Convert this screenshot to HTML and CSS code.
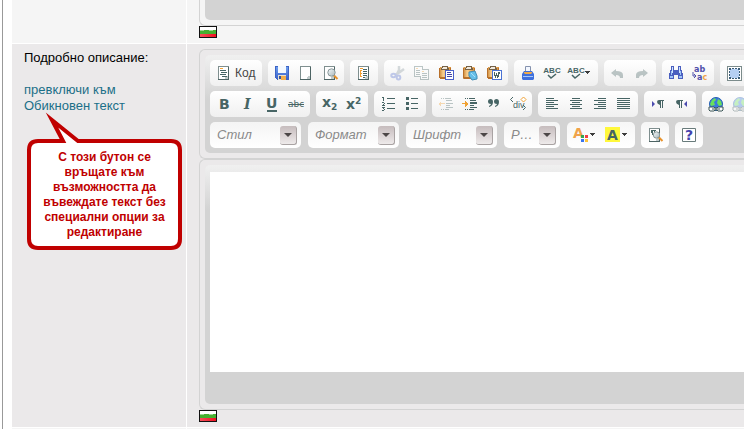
FILE: index.html
```html
<!DOCTYPE html>
<html lang="bg">
<head>
<meta charset="utf-8">
<meta name="viewport" content="width=device-width, initial-scale=1">
<title>Подробно описание</title>
<link rel="stylesheet" href="styles.css">
</head>
<body>
<svg class="defs" aria-hidden="true">
  <defs>
    <linearGradient id="silver" x2="1" y2="1"><stop offset="0" stop-color="#f4fafc"/><stop offset="1" stop-color="#a9b6ba"/></linearGradient>
    <linearGradient id="blue" x2="0" y2="1"><stop offset="0" stop-color="#6b9cec"/><stop offset="1" stop-color="#3a62cc"/></linearGradient>
    <linearGradient id="tan" x2="1" y2="0"><stop offset="0" stop-color="#c9802c"/><stop offset=".35" stop-color="#f7cf90"/><stop offset="1" stop-color="#d98d35"/></linearGradient>
    <linearGradient id="red-band" x2="1" y2="0"><stop offset="0" stop-color="#f6505c"/><stop offset="1" stop-color="#f01020"/></linearGradient>
    <symbol id="page" viewBox="0 0 16 16"><path d="M2 1h11v14H2z" fill="#7f8f8f"/><path d="M12 2h1v13H2v-1h10z" fill="#4d6464"/><path d="M3 2h9v12H3z" fill="#fff"/><path d="M9 14v-2h1v-1h2v3z" fill="#c3cccc"/></symbol>
    <symbol id="clipboard" viewBox="0 0 16 16"><path d="M1 3l1-1h10l1 1v10l-1 1H2l-1-1z" fill="url(#tan)"/><path d="M1 12h12v1l-1 1H2l-1-1zM1 3h1v10H1zm11 0h1v10h-1z" fill="#b8702a"/><path d="M4 1h6v2h1v2H3V3h1z" fill="#756147"/><path d="M5 2h4v2H4V3h1z" fill="#f0e9dd"/></symbol>
    <symbol id="caret" viewBox="0 0 8 16"><path d="M1 6h5v1H5v1H4v1H3V8H2V7H1z" fill="#3c3c3c"/></symbol>
    <symbol id="flag" viewBox="0 0 18 12"><path fill="#111" d="M0 0h18v12H0z"/><path fill="#fff" d="M1 1h16v3H1z"/><path fill="#45b030" d="M1 4h16v4H1z"/><path fill="url(#red-band)" d="M1 8h16v3H1z"/><path fill="#9bd68e" d="M1 4h4v1H1zm9 0h4v1h-4z"/></symbol>
    <symbol id="globe" viewBox="0 0 16 16"><circle cx="8" cy="8" r="6.500" fill="#3b78df" stroke="#245fb1"/><path d="M2 8l2-4 3-2 1 2-2 2 1 3-4 1zM10 3l3 2 1 4-3 1-2-3z" fill="#69e05b"/><path d="M1 11h5l1 1h2l1-1h5v3l-1 1h-4l-1-1H7l-1 1H2l-1-1z" fill="#fff" stroke="#3a5555"/><path d="M4 13h8" stroke="#3a5555"/></symbol>
  </defs>
</svg>

<main class="form">
  <div class="cell light"></div>
  <div class="cell light field first">
    <div class="frame frame-end"><div class="frame-foot"></div></div>
    <svg class="flag crisp" role="img" aria-label="Български"><use href="#flag"/></svg>
  </div>

  <div class="cell side">
    <label for="description">Подробно описание:</label>
    <a href="#plain">превключи към<br>Обикновен текст</a>
    <div class="callout">
      <svg class="bubble" viewBox="0 0 157 140" aria-hidden="true"><path d="M37 29 26 8 52 29H145Q154 29 154 38V127Q154 136 145 136H12Q3 136 3 127V38Q3 29 12 29Z" fill="#fff" stroke="#c00000" stroke-width="4" stroke-miterlimit="12"/></svg>
      <p>С този бутон се връщате към възможността да въвеждате текст без специални опции за редактиране</p>
    </div>
  </div>

  <div class="cell field">
    <div class="frame">
      <div class="toolbar" role="toolbar" aria-label="Форматиране">
        <div class="row">
          <div class="group">
            <button type="button" class="code"><svg viewBox="0 0 16 16" class="crisp"><use href="#page"/><path d="M4 3h3v1H4z" fill="#f3a53a"/><path d="M4 5h6v1H4zm1 2h6v1H5zM4 9h6v1H4zm2 2h5v1H6z" fill="#476565"/></svg><span>Код</span></button>
          </div>
          <div class="group">
            <button type="button" aria-label="Запис"><svg viewBox="0 0 16 16" class="crisp"><path d="M1 1h14v14H3l-2-2z" fill="#3c63c5"/><path d="M2 2h12v12H3l-1-1z" fill="url(#blue)"/><path d="M4 1h8v7H4z" fill="#f4f9ff"/><path d="M4 10h8v5H4z" fill="#e9dfcd"/><path d="M7 11h5v4H7z" fill="#f1ad4c"/><path d="M5 11h2v3H5z" fill="#35559c"/></svg></button>
            <button type="button" aria-label="Нова страница"><svg viewBox="0 0 16 16" class="crisp"><use href="#page"/></svg></button>
            <button type="button" aria-label="Преглед"><svg viewBox="0 0 16 16"><use href="#page"/><path d="M11.500 10l4 4" stroke="#e8922b" stroke-width="2"/><circle cx="9.500" cy="7.500" r="3.700" fill="url(#silver)" stroke="#899799"/></svg></button>
          </div>
          <div class="group">
            <button type="button" aria-label="Шаблони"><svg viewBox="0 0 16 16" class="crisp"><use href="#page"/><path d="M4 3h3v1H4zm0 2h1v7H4zm1 0h1v1H5zm0 3h1v1H5zm0 3h1v1H5z" fill="#ef9e31"/><path d="M7 4h4v1H7zm0 2h4v1H7zm0 2h4v1H7zm0 2h4v1H7zm0 2h2v1H7z" fill="#476565"/></svg></button>
          </div>
          <div class="group">
            <button type="button" disabled aria-label="Отрежи"><svg viewBox="0 0 16 16"><path d="M9 1v4L7 9M14 4l-4 3-5 3" fill="none" stroke="#8c9ba1" stroke-width="2.500"/><ellipse cx="3.500" cy="10.500" rx="2.200" ry="1.800" fill="none" stroke="#5872d0" stroke-width="2"/><ellipse cx="8.500" cy="12.500" rx="1.800" ry="2" fill="none" stroke="#5872d0" stroke-width="2"/></svg></button>
            <button type="button" disabled aria-label="Копирай"><svg viewBox="0 0 16 16" class="crisp"><path d="M0 1h9v11H0zM6 4h9v11H6z" fill="#476565"/><path d="M1 2h7v9H1zM7 5h7v9H7z" fill="#fff"/><path d="M2 3h2v1H2zm6 3h2v1H8z" fill="#ef9e31"/><path d="M2 5h4v1H2zm0 2h4v1H2zm0 2h4v1H2zm6-1h5v1H8zm0 2h5v1H8zm0 2h5v1H8z" fill="#476565"/></svg></button>
            <button type="button" aria-label="Вмъкни"><svg viewBox="0 0 16 16" class="crisp"><use href="#clipboard"/><path d="M7 5h9v10H7z" fill="#4a61ca"/><path d="M8 6h7v8H8z" fill="#fff"/><path d="M9 7h4v1H9zm0 2h5v1H9zm0 2h5v1H9z" fill="#4346a5"/></svg></button>
            <button type="button" aria-label="Вмъкни като текст"><svg viewBox="0 0 16 16"><use href="#clipboard"/><path d="M7 7l6-1 2 5v3l-5 1-3-4z" fill="#65bfe9" stroke="#438cb4"/><path d="M9 8l4 4" stroke="#a9e0fa"/></svg></button>
            <button type="button" aria-label="Вмъкни от Word"><svg viewBox="0 0 16 16" class="crisp"><use href="#clipboard"/><path d="M6 5h10v10H6z" fill="#4a72d4"/><path d="M7 6h8v8H7z" fill="#fff"/><path d="M8 7h1v3h1V8h1v2h1V7h2v2h-1v3h-1v1h-1v-2h-1v2H9v-2H8z" fill="#4a6161"/></svg></button>
          </div>
          <div class="group">
            <button type="button" aria-label="Печат"><svg viewBox="0 0 16 16"><path d="M5.500 1.500h5v5h-5z" fill="#f3f7ff" stroke="#8592ae"/><path d="M4 6h8l2 3v5l-1 1H3l-1-1V9z" fill="#3f70dc"/><path d="M4 7h8v1l-1 1H5L4 8z" fill="#efaa49"/><path d="M3 11h10v1H3z" fill="#a7c7fa"/></svg></button>
            <button type="button" aria-label="Правопис"><svg viewBox="0 0 16 16"><text x="8" y="8" class="glyph tiny">ABC</text><path d="M4 10l3 3 5-4" fill="none" stroke="#476565" stroke-width="1.500"/></svg></button>
            <button type="button" class="menu" aria-label="Проверка при писане"><svg viewBox="0 0 16 16"><text x="8" y="8" class="glyph tiny">ABC</text><path d="M4 10l3 3 5-4" fill="none" stroke="#476565" stroke-width="1.500"/></svg><svg class="caret crisp"><use href="#caret"/></svg></button>
          </div>
          <div class="group">
            <button type="button" disabled aria-label="Отмени"><svg viewBox="0 0 16 16"><path d="M1 8l5-4v2q7 0 7 4v3h-3q0-3-4-3v2z" fill="#476565"/></svg></button>
            <button type="button" disabled aria-label="Повтори"><svg viewBox="0 0 16 16"><path d="M14 8L9 4v2q-7 0-7 4v3h3q0-3 4-3v2z" fill="#476565"/></svg></button>
          </div>
          <div class="group">
            <button type="button" aria-label="Търси"><svg viewBox="0 0 16 16" class="crisp"><path d="M3 1h3v4h4V1h3v4h1v3h1v6h-5v-4H6v4H1V8h1V5h1z" fill="#4a5fc0"/><path d="M4 2h1v6H4zm7 0h1v6h-1z" fill="#cfe6ff"/><path d="M3 6h1v4H3zm9 0h1v4h-1zM2 11h3v2H2zm9 0h3v2h-3z" fill="#9fc5f7"/></svg></button>
            <button type="button" aria-label="Замени"><svg viewBox="0 0 16 16"><text x="2" y="7" class="glyph swap">ab</text><text x="5" y="15" class="glyph swap">a<tspan class="accent">c</tspan></text><path d="M1 7v4h3M2 9l2 2-2 2" fill="none" stroke="#5050ab"/></svg></button>
          </div>
          <div class="group open">
            <button type="button" aria-label="Избери всичко"><svg viewBox="0 0 16 16" class="crisp"><path d="M1 1h15v15H1z" fill="#7b8b8b"/><path d="M2 2h13v13H2z" fill="#fff"/><path d="M4 4h9v9H4z" fill="#b5cff3"/><path d="M3 3h2v2H3zm3 0h2v1H6zm3 0h2v1H9zm3 0h2v2h-2zM3 6h1v2H3zm0 3h1v2H3zm10-3h1v2h-1zm0 3h1v2h-1zM3 12h2v2H3zm3 1h2v1H6zm3 0h2v1H9zm3-1h2v2h-2z" fill="#3b5d78"/></svg></button>
          </div>
        </div>

        <div class="row">
          <div class="group">
            <button type="button" aria-label="Удебелен"><svg viewBox="0 0 16 16"><text x="3" y="13" class="glyph big">B</text></svg></button>
            <button type="button" aria-label="Наклонен"><svg viewBox="0 0 16 16"><text x="4" y="13" class="glyph big italic">I</text></svg></button>
            <button type="button" aria-label="Подчертан"><svg viewBox="0 0 16 16"><text x="2" y="12" class="glyph big">U</text><path d="M3 14h10v2H3z" fill="#476565"/></svg></button>
            <button type="button" aria-label="Зачертан"><svg viewBox="0 0 16 16"><text x="0" y="11" class="glyph strike">abc</text><path d="M0 8h16v1H0z" fill="#476565"/></svg></button>
          </div>
          <div class="group">
            <button type="button" aria-label="Долен индекс"><svg viewBox="0 0 16 16"><text x="0" y="11" class="glyph big">x</text><text x="9" y="14" class="glyph index">2</text></svg></button>
            <button type="button" aria-label="Горен индекс"><svg viewBox="0 0 16 16"><text x="0" y="13" class="glyph big">x</text><text x="9" y="8" class="glyph index">2</text></svg></button>
          </div>
          <div class="group">
            <button type="button" aria-label="Номериран списък"><svg viewBox="0 0 16 16" class="crisp"><path d="M2 1h2v4H3V2H2zM2 6h2v1h1v1H4v1h1v1H2V9h1V8h1V7H2zM2 11h3v1H4v1h1v1H4v1H2v-1h2v-1H3v-1H2zM7 2h8v1H7zm0 5h8v1H7zm0 5h8v1H7z" fill="#476565"/></svg></button>
            <button type="button" aria-label="Списък с точки"><svg viewBox="0 0 16 16" class="crisp"><path d="M2 1h3v3H2zm0 5h3v3H2zm0 5h3v3H2zM7 2h7v1H7zm0 5h7v1H7zm0 5h7v1H7z" fill="#476565"/></svg></button>
          </div>
          <div class="group">
            <button type="button" disabled aria-label="Намали отстъпа"><svg viewBox="0 0 16 16" class="crisp"><path d="M3 2h1v1H3zm2 0h1v1H5zm2 0h6v1H7zm1 2h6v1H8zm0 3h7v1H8zm0 2h4v1H8zm0 2h7v1H8zm-5 2h1v1H3zm2 0h1v1H5zm2 0h4v1H7z" fill="#476565"/><path d="M0 8l3-3v2h4v1H3v3z" fill="#f0a132"/></svg></button>
            <button type="button" aria-label="Увеличи отстъпа"><svg viewBox="0 0 16 16" class="crisp"><path d="M3 2h1v1H3zm2 0h1v1H5zm2 0h6v1H7zm1 2h6v1H8zm0 2h7v2H8zm0 3h4v1H8zm0 2h7v1H8zm-5 2h1v1H3zm2 0h1v1H5zm2 0h5v1H7z" fill="#476565"/><path d="M6 8L3 5v2H0v1h3v3z" fill="#f0a132"/></svg></button>
            <button type="button" aria-label="Цитат"><svg viewBox="0 0 16 16"><path d="M4.500 3Q7 3 7 6q0 4-4 5v-1q2-1 2-2-3 0-3-2.500Q2 3 4.500 3zM10.500 3Q13 3 13 6q0 4-4 5v-1q2-1 2-2-3 0-3-2.500Q8 3 10.500 3z" fill="#476565"/></svg></button>
            <button type="button" aria-label="Раздел"><svg viewBox="0 0 16 16"><path d="M3 1L.500 3.500 3 6M13 9l2.500 2.500L13 14" fill="none" stroke="#476565"/><text x="3" y="12" class="glyph div">div</text><path d="M13.500 1L16 3.500 13.500 6 11 3.500z" fill="#fff" stroke="#f0a132"/></svg></button>
          </div>
          <div class="group">
            <button type="button" aria-label="Ляво"><svg viewBox="0 0 16 16" class="crisp"><path d="M2 2h8v1H2zm0 2h12v1H2zm0 2h8v1H2zm0 2h12v1H2zm0 2h8v1H2zm0 2h12v1H2z" fill="#476565"/></svg></button>
            <button type="button" aria-label="Център"><svg viewBox="0 0 16 16" class="crisp"><path d="M4 2h8v1H4zM2 4h12v1H2zm2 2h8v1H4zM2 8h12v1H2zm2 2h8v1H4zm-2 2h12v1H2z" fill="#476565"/></svg></button>
            <button type="button" aria-label="Дясно"><svg viewBox="0 0 16 16" class="crisp"><path d="M6 2h8v1H6zM2 4h12v1H2zm4 2h8v1H6zM2 8h12v1H2zm4 2h8v1H6zm-4 2h12v1H2z" fill="#476565"/></svg></button>
            <button type="button" aria-label="Двустранно"><svg viewBox="0 0 16 16" class="crisp"><path d="M1 2h13v1H1zm0 2h13v1H1zm0 2h13v1H1zm0 2h13v1H1zm0 2h13v1H1zm0 2h13v1H1z" fill="#476565"/></svg></button>
          </div>
          <div class="group">
            <button type="button" aria-label="Отляво надясно"><svg viewBox="0 0 16 16"><path d="M2 5l3 3-3 3z" fill="#4b4bae"/><path d="M9 4h5v1h-1v7h-1V5h-1v7h-1V9Q7 8 7 6q0-2 2-2z" fill="#476565"/></svg></button>
            <button type="button" aria-label="Отдясно наляво"><svg viewBox="0 0 16 16"><path d="M13 5l-3 3 3 3z" fill="#4b4bae"/><path d="M4 4h5v1H8v7H7V5H6v7H5V9Q2 8 2 6q0-2 2-2z" fill="#476565"/></svg></button>
          </div>
          <div class="group open">
            <button type="button" aria-label="Връзка"><svg><use href="#globe"/></svg></button>
            <button type="button" disabled aria-label="Премахни връзка"><svg><use href="#globe"/></svg></button>
          </div>
        </div>

        <div class="row">
          <div class="combo"><select aria-label="Стил"><option>Стил</option></select><span class="drop"></span></div>
          <div class="combo"><select aria-label="Формат"><option>Формат</option></select><span class="drop"></span></div>
          <div class="combo"><select aria-label="Шрифт"><option>Шрифт</option></select><span class="drop"></span></div>
          <div class="combo small"><select aria-label="Размер"><option>Р…</option></select><span class="drop"></span></div>
          <div class="group">
            <button type="button" class="menu" aria-label="Цвят на текста"><svg viewBox="0 0 16 16"><text x="0" y="11" class="glyph big accent">A</text><path d="M8 8h3v3H8z" fill="#38a451"/><path d="M12 8h3v3h-3z" fill="#f23b44"/><path d="M8 12h3v3H8z" fill="#3974ef"/><path d="M12 12h3v3h-3z" fill="#ffc43a"/></svg><svg class="caret crisp"><use href="#caret"/></svg></button>
            <button type="button" class="menu" aria-label="Цвят на фона"><svg viewBox="0 0 16 16"><path d="M0 0h15v15H0z" fill="#fff83b"/><text x="2" y="13" class="glyph big">A</text></svg><svg class="caret crisp"><use href="#caret"/></svg></button>
          </div>
          <div class="group">
            <button type="button" aria-label="Покажи блоковете"><svg viewBox="0 0 16 16"><use href="#page"/><path d="M4 3h5v1H8v4H7V4H6v4H5V6H4z" fill="#476565"/><path d="M11.500 10l4 4" stroke="#e8922b" stroke-width="2"/><circle cx="9.500" cy="8" r="3.200" fill="url(#silver)" stroke="#899799"/></svg></button>
          </div>
          <div class="group">
            <button type="button" aria-label="Помощ"><svg viewBox="0 0 16 16"><path d="M1.500 1.500h13v13h-13z" fill="#fff" stroke="#687b7b"/><text x="4" y="13" class="glyph big help">?</text></svg></button>
          </div>
        </div>
      </div>
    </div>
    <div class="frame"><div class="editing"><textarea id="description"></textarea></div></div>
    <svg class="flag crisp" role="img" aria-label="Български"><use href="#flag"/></svg>
  </div>

  <div class="cell light"></div>
  <div class="cell light"></div>
</main>
</body>
</html>
```
FILE: styles.css
```css
* { box-sizing: border-box; }

body {
  margin: 0;
  overflow: hidden;
  background: #fff;
  color: #000;
  font: 13px/16px "Liberation Sans", Arial, sans-serif;
}

.defs { display: block; width: 0; height: 0; }

.form {
  display: grid;
  grid-template-columns: 174px minmax(0, 1fr);
  gap: 1px;
  margin-left: 2px;
  padding-left: 9px;
  border-left: 1px solid #999;
}

.cell { background: #ebe9ea; min-height: 1px; }
.light { background: #f5f5f5; }
.field { padding: 5px 0 5px 12px; }
.first { padding-top: 0; }

.side {
  position: relative;
  display: flex;
  flex-direction: column;
  gap: 16px;
  padding: 6px 12px;
}
.side a { color: #1b6f88; text-decoration: none; }

.callout {
  position: absolute;
  left: 14px;
  top: 68px;
  width: 157px;
  padding: 38px 12px 12px;
  color: #c00000;
  font-size: 12px;
  font-weight: bold;
  line-height: 15px;
  text-align: center;
}
.callout p { position: relative; margin: 0; }
.bubble { position: absolute; inset: 0; width: 157px; height: 140px; }

.flag { display: block; width: 18px; height: 12px; }

/* The editor bleeds off the right side of the page. */
.frame {
  padding: 5px 0 5px 5px;
  border: 1px solid #d3d3d3;
  border-right: 0;
  border-radius: 6px 0 0 6px;
}
.frame-end { padding-top: 0; border-top: 0; border-radius: 0 0 0 6px; }
.frame-foot { height: 20px; background: #d3d3d3; border-radius: 0 0 0 5px; }

.toolbar, .editing {
  border-radius: 5px 0 0 5px;
  background: #d3d3d3 linear-gradient(#f0f0f0, #d3d3d3) no-repeat 0 0 / 100% 45px;
}
.toolbar { display: grid; gap: 5px; padding: 5px 0 5px 5px; overflow: hidden; }
.row { display: flex; gap: 6px; min-width: 0; }

.group {
  display: flex;
  flex: none;
  align-items: center;
  height: 26px;
  padding: 0 2px;
  border-radius: 5px;
  background: linear-gradient(#fff, #f0f0f0);
}
.open {
  flex: 1 1 0;
  min-width: 0;
  padding-right: 0;
  overflow: hidden;
  border-radius: 5px 0 0 5px;
}
.row:last-child .group { background: linear-gradient(#f6f6f6, #fff); }

button {
  display: flex;
  flex: none;
  align-items: center;
  height: 24px;
  padding: 0 4px;
  border: 0;
  background: none;
  color: #474747;
  font: 12px/16px "Liberation Sans", Arial, sans-serif;
}
.open button { padding-right: 0; margin-right: 4px; }
.open button:last-child { flex: 0 1 auto; min-width: 0; margin-right: 0; overflow: hidden; }
button svg { display: block; flex: none; width: 16px; height: 16px; overflow: visible; }
button .caret { width: 8px; }
button:disabled svg { opacity: .35; }
.code { gap: 3px; width: 48px; }
.crisp { shape-rendering: crispEdges; }

.glyph { fill: #476565; font-family: "DejaVu Sans", sans-serif; font-weight: bold; }
.tiny { font-size: 8px; font-family: "Liberation Sans", sans-serif; text-anchor: middle; }
.big { font-size: 14px; }
.italic { font-family: "DejaVu Serif", serif; font-style: italic; }
.strike { font-size: 9px; font-weight: normal; }
.index { font-size: 9px; }
.div { font-size: 9px; font-family: "Liberation Sans", sans-serif; font-weight: normal; }
.swap { fill: #5050ab; font-size: 8px; }
.help { fill: #4343ad; }
.accent { fill: #f0a34a; }

.combo {
  display: grid;
  flex: none;
  width: 91px;
  height: 26px;
  margin-right: 1px;
  border-radius: 5px;
  background: linear-gradient(#f4f4f4, #fff);
}
.small { width: 56px; }
.combo select {
  grid-area: 1 / 1;
  width: 100%;
  padding: 0 20px 0 7px;
  border: 0;
  appearance: none;
  background: none;
  color: #8a8a8a;
  font: italic 13px/16px "Liberation Sans", Arial, sans-serif;
}
.drop {
  display: grid;
  grid-area: 1 / 1;
  place-self: center end;
  place-items: center;
  width: 17px;
  height: 19px;
  margin-right: 4px;
  border-right: 1px solid #a9a3a3;
  border-bottom: 1px solid #a9a3a3;
  border-radius: 3px;
  background: linear-gradient(#c6bcbd, #eeeaea);
  pointer-events: none;
}
.drop::before {
  content: "";
  border: 4px solid transparent;
  border-top-color: #4c4747;
  border-bottom: 0;
}

.editing { padding: 7px 0 32px 5px; }
textarea {
  display: block;
  width: 100%;
  height: 200px;
  padding: 4px;
  border: 0;
  background: #fff;
  resize: none;
  outline: 0;
}
```
